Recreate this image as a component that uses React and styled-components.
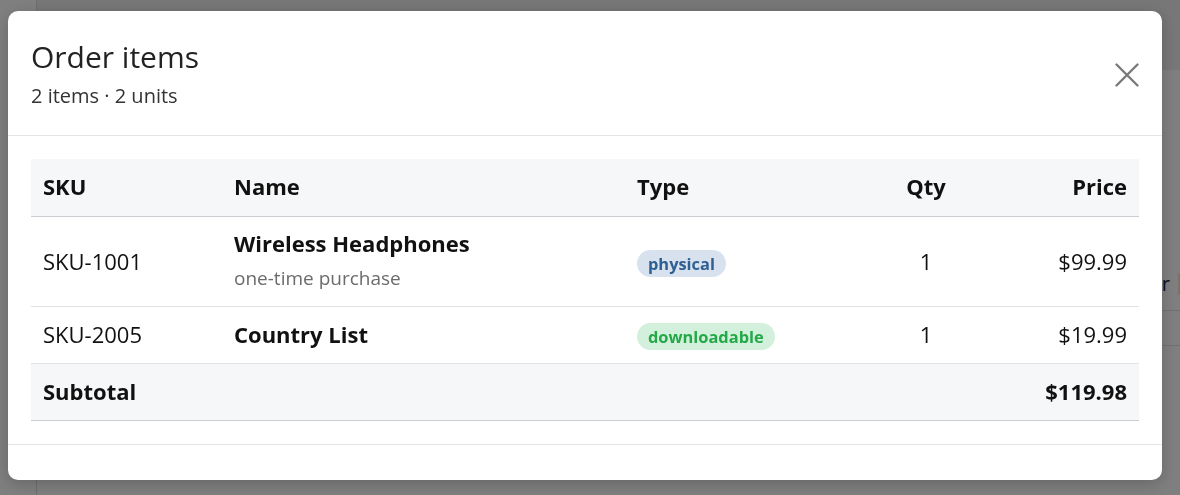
import React from 'react';
import styled, { createGlobalStyle } from 'styled-components';

const items = [
  { sku: 'SKU-1001', name: 'Wireless Headphones', note: 'one-time purchase', type: 'physical', qty: 1, price: '$99.99' },
  { sku: 'SKU-2005', name: 'Country List', type: 'downloadable', qty: 1, price: '$19.99' },
];

export default function App() {
  return (
    <>
      <GlobalStyle />
      <Page>
        <Sidebar />
        <Main>
          <TopBar />
          <BackRows>
            <BackRow tall>
              <BackCell>Order</BackCell>
              <BackTag />
            </BackRow>
            <BackRow />
          </BackRows>
        </Main>
      </Page>

      <Overlay>
        <Modal>
          <Header>
            <div>
              <Title>Order items</Title>
              <Subtitle>2 items · 2 units</Subtitle>
            </div>
            <CloseButton aria-label="Close">
              <svg width="24" height="24" viewBox="0 0 24 24" fill="none" stroke="#7a7a7a" strokeWidth="2.4" strokeLinecap="round">
                <path d="M1.5 1.5 22.5 22.5M22.5 1.5 1.5 22.5" />
              </svg>
            </CloseButton>
          </Header>
          <Body>
            <Table>
              <colgroup>
                <col style={{ width: 191 }} />
                <col style={{ width: 403 }} />
                <col style={{ width: 240 }} />
                <col style={{ width: 122 }} />
                <col style={{ width: 152 }} />
              </colgroup>
              <thead>
                <tr>
                  <Th>SKU</Th>
                  <Th>Name</Th>
                  <Th>Type</Th>
                  <Th align="center">Qty</Th>
                  <Th align="right">Price</Th>
                </tr>
              </thead>
              <tbody>
                {items.map((item) => (
                  <Tr key={item.sku}>
                    <Td>{item.sku}</Td>
                    <Td>
                      <ItemName>{item.name}</ItemName>
                      {item.note && <ItemNote>{item.note}</ItemNote>}
                    </Td>
                    <Td>
                      <Badge kind={item.type}>{item.type}</Badge>
                    </Td>
                    <Td align="center">{item.qty}</Td>
                    <Td align="right">{item.price}</Td>
                  </Tr>
                ))}
              </tbody>
              <tfoot>
                <TotalRow>
                  <Td colSpan={4} bold>Subtotal</Td>
                  <Td align="right" bold>$119.98</Td>
                </TotalRow>
              </tfoot>
            </Table>
          </Body>
          <Footer />
        </Modal>
      </Overlay>
    </>
  );
}

const badgeColors = {
  physical: { bg: '#d8e2ee', fg: '#2f6094' },
  downloadable: { bg: '#d3f0dc', fg: '#23a948' },
};

const GlobalStyle = createGlobalStyle`
  html, body {
    margin: 0;
    padding: 0;
    background: #ffffff;
    font-family: "Open Sans", "Noto Sans", sans-serif;
    overflow: hidden;
  }
  * { box-sizing: border-box; }
`;

const Page = styled.div`
  display: flex;
  width: 1180px;
  height: 495px;
  background: #fefefe;
`;

const Sidebar = styled.div`
  width: 37px;
  border-right: 1px solid #dddddd;
`;

const Main = styled.div`
  flex: 1;
  display: flex;
  flex-direction: column;
`;

const TopBar = styled.div`
  height: 70px;
  background: #eeeeee;
`;

const BackRows = styled.div`
  padding-top: 200px;
`;

const BackRow = styled.div`
  height: ${({ tall }) => (tall ? 41 : 35)}px;
  display: flex;
  justify-content: flex-end;
  align-items: flex-start;
  gap: 6px;
  border-bottom: 1px solid #e2e2e2;
`;

const BackCell = styled.span`
  font-size: 20px;
  line-height: 27px;
  color: #1a2238;
  margin-right: 2px;
`;

const BackTag = styled.span`
  width: 14px;
  height: 22px;
  margin-top: 3px;
  background: #f5e6cc;
  margin-right: -12px;
`;

const Overlay = styled.div`
  position: fixed;
  inset: 0;
  background: rgba(0, 0, 0, 0.5);
  display: flex;
  align-items: flex-start;
  padding: 11px 0 0 8px;
`;

const Modal = styled.div`
  width: 1154px;
  height: 469px;
  background: #ffffff;
  border-radius: 10px;
  display: flex;
  flex-direction: column;
  box-shadow: 0 4px 16px rgba(0, 0, 0, 0.2);
  overflow: hidden;
`;

const Header = styled.div`
  display: flex;
  justify-content: space-between;
  align-items: center;
  padding: 27px 23px 24px 23px;
  border-bottom: 1px solid #e4e4e7;
`;

const Title = styled.h2`
  margin: 0;
  font-size: 30px;
  font-weight: 500;
  line-height: 1.27;
  color: #222222;
`;

const Subtitle = styled.div`
  margin-top: 5px;
  font-size: 20px;
  line-height: 1.5;
  color: #333333;
`;

const CloseButton = styled.button`
  border: 0;
  background: none;
  padding: 0;
  width: 24px;
  height: 24px;
  display: flex;
  cursor: pointer;
`;

const Body = styled.div`
  padding: 23px;
`;

const Table = styled.table`
  width: 100%;
  border-collapse: collapse;
  table-layout: fixed;
  font-size: 22px;
  color: #111111;
  thead tr {
    background: #f6f7f9;
    border-bottom: 1px solid #cbcdd2;
  }
`;

const Th = styled.th`
  padding: 11px 12px 13px;
  line-height: 33px;
  font-weight: 700;
  text-align: ${({ align }) => align || 'left'};
`;

const Tr = styled.tr`
  border-bottom: 1px solid #e1e1e8;
`;

const TotalRow = styled.tr`
  background: #f6f7f9;
  border-bottom: 1px solid #cbcdd2;
`;

const Td = styled.td`
  padding: 11px 12px 13px;
  line-height: 32px;
  vertical-align: middle;
  text-align: ${({ align }) => align || 'left'};
  font-weight: ${({ bold }) => (bold ? 700 : 400)};
`;

const ItemName = styled.div`
  font-weight: 700;
  line-height: 30px;
`;

const ItemNote = styled.div`
  margin-top: 6px;
  font-size: 19px;
  line-height: 29px;
  color: #6b6b6b;
`;

const Badge = styled.span`
  display: inline-block;
  padding: 3px 11px;
  border-radius: 999px;
  font-size: 16.4px;
  line-height: 21px;
  font-weight: 700;
  background: ${({ kind }) => badgeColors[kind].bg};
  color: ${({ kind }) => badgeColors[kind].fg};
`;

const Footer = styled.div`
  flex: 1;
  border-top: 1px solid #e4e4e7;
`;
